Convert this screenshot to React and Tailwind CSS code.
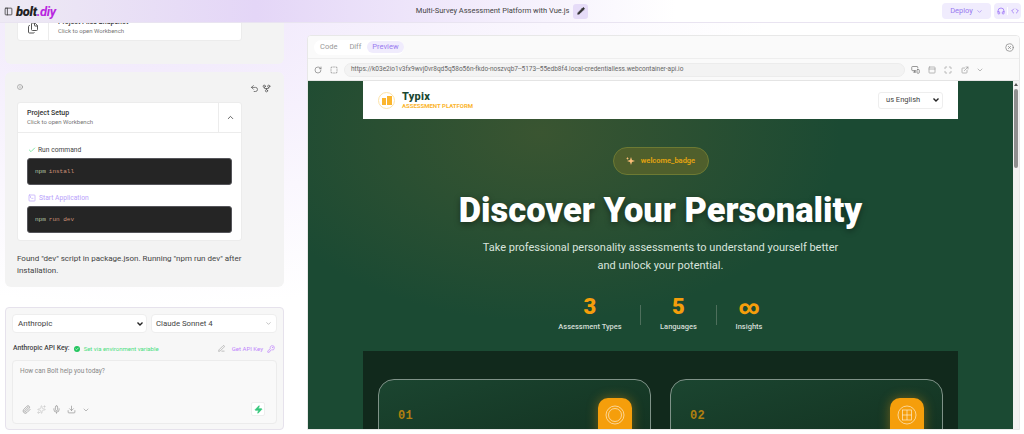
import React from "react";
import {
  PanelLeft, Info, Undo2, GitFork, ChevronUp, ChevronDown, Check, SquareTerminal, Files, Pencil, KeyRound,
  Paperclip, Sparkles, Mic, Download, Zap, RotateCw, SquareDashed, MonitorSmartphone, PanelTop, Maximize,
  ExternalLink, CircleX, Headphones, Code, PenLine,
} from "lucide-react";

const font = { fontFamily: 'Roboto, "Noto Sans", sans-serif' };

const CommandBlock = ({ cmd }) => (
  <div className="mx-[9px] h-[27px] flex items-center pl-[7px] rounded-[3px] bg-[#252525] border border-[#55555a] font-['Liberation_Mono',monospace] text-[6px]">
    <span className="text-[#b5cea8]">npm</span>
    <span className="ml-[3px] text-[#ce9178]">{cmd}</span>
  </div>
);

const Stat = ({ value, label, w, big }) => (
  <div className={`${w} flex flex-col items-center`}>
    <div className={`h-[24px] flex items-center font-black text-[#f59e0b] leading-none ${big ? "text-[20px]" : "text-[22px]"}`}>{value}</div>
    <div className="mt-[2px] text-[7.5px] font-medium text-[#d3ddd6]">{label}</div>
  </div>
);

const SurveyCard = ({ num, children }) => (
  <div className="flex-1 h-[80px] rounded-t-[16px] border border-[#7f9288] bg-gradient-to-br from-[#1b4530] to-[#12301f] flex justify-between pl-[19px] pr-[18px] pt-[18px]">
    <span className="mt-[12px] text-[12px] font-['Liberation_Mono',monospace] font-bold text-[#b07f10] tracking-wide leading-none">{num}</span>
    <div className="w-[34px] h-[44px] rounded-[10px] bg-[#f59e0b] shadow-[0_0_12px_rgba(245,158,11,0.4)] flex justify-center pt-[7px]">{children}</div>
  </div>
);

const Arrow = () => (
  <svg width="6" height="4" viewBox="0 0 6 4" fill="none" stroke="#222" strokeWidth="1.4"><path d="M.5.5 3 3 5.5.5" /></svg>
);

export default function App() {
  return (
    <div style={font} className="w-[1024px] h-[434px] overflow-hidden flex flex-col bg-[radial-gradient(ellipse_at_15%_0%,#efe6fb_0%,#faf7fe_32%,#ffffff_50%)] text-[#333]">
      {/* top bar */}
      <header className="h-[23px] shrink-0 flex items-center border-b border-[#e9e4f1] bg-gradient-to-r from-[#eeeaf4] via-[#e4d6f7] via-25% to-white to-[66%] relative">
        <PanelLeft className="ml-[4px] w-[9px] h-[9px] text-[#333]" />
        <div className="ml-[3px] text-[13px] font-black italic leading-none tracking-tight text-[#222]">
          bolt<span className="text-[#b826e0] font-bold">.diy</span>
        </div>
        <div className="ml-[360px] flex items-center text-[7.5px] text-[#444]">
          Multi-Survey Assessment Platform with Vue.js
          <span className="ml-[4px] w-[15px] h-[15px] rounded-[3px] bg-[#e6dcf8] flex items-center justify-center">
            <Pencil className="w-[8px] h-[8px] text-[#333]" fill="#333" />
          </span>
        </div>
        <div className="ml-auto flex items-center mr-[3px]">
          <div className="w-[49px] h-[16px] rounded-[4px] bg-[#f0ecfd] flex items-center justify-center gap-[3px] text-[7.5px] text-[#9a7bf0]">
            Deploy <ChevronDown className="w-[7px] h-[7px]" />
          </div>
          <div className="ml-[3px] w-[27px] h-[16px] rounded-[4px] bg-[#f0ecfd] flex items-center text-[#8b5cf6]">
            <span className="w-[14px] flex justify-center border-r border-white"><Headphones className="w-[8px] h-[8px]" /></span>
            <span className="w-[13px] flex justify-center"><Code className="w-[8px] h-[8px]" /></span>
          </div>
        </div>
      </header>

      <div className="flex flex-1 min-h-0">
        {/* chat column */}
        <div className="w-[307px] shrink-0 overflow-hidden pl-[5px] flex flex-col">
          <div className="w-[279px] h-[65px] -mt-[24px] shrink-0 rounded-[6px] bg-[#f3f3f3] pl-[12px] pt-[10px]">
            <div className="w-[225px] h-[32px] rounded-[3px] bg-white border border-[#ececec] flex">
              <div className="w-[31px] border-r border-[#ececec] flex items-center justify-center pt-[6px]">
                <Files className="w-[12px] h-[12px] text-[#555]" />
              </div>
              <div className="pl-[9px] pt-[9px] leading-none">
                <div className="text-[7px] font-medium text-[#333]">Project Files Snapshot</div>
                <div className="mt-[2px] text-[6px] text-[#777]">Click to open Workbench</div>
              </div>
            </div>
          </div>

          <div className="w-[279px] h-[215px] mt-[8px] shrink-0 rounded-[6px] bg-[#f3f3f3] pl-[12px]">
            <div className="h-[30px] flex items-center justify-between pr-[13px] text-[#777]">
              <Info className="w-[6px] h-[6px]" />
              <div className="flex items-center gap-[3px] mt-[2px] text-[#555]">
                <Undo2 className="w-[9px] h-[9px]" />
                <GitFork className="w-[9px] h-[9px]" />
              </div>
            </div>
            <div className="w-[225px] h-[139px] rounded-[3px] bg-white border border-[#ececec]">
              <div className="h-[30px] flex border-b border-[#ececec]">
                <div className="flex-1 pl-[9px] pt-[7px] leading-none">
                  <div className="text-[7px] font-medium text-[#333]">Project Setup</div>
                  <div className="mt-[2px] text-[6px] text-[#777]">Click to open Workbench</div>
                </div>
                <div className="w-[23px] border-l border-[#ececec] flex items-center justify-center">
                  <ChevronUp className="w-[9px] h-[9px] text-[#333]" />
                </div>
              </div>
              <div className="mt-[12px] ml-[10px] h-[10px] flex items-center text-[6.7px] text-[#444]">
                <Check className="w-[8px] h-[8px] text-[#4ade80]" />
                <span className="ml-[2px]">Run command</span>
              </div>
              <div className="mt-[3px]"><CommandBlock cmd="install" /></div>
              <div className="mt-[8px] ml-[10px] h-[10px] flex items-center text-[6.7px] text-[#b9a2fb]">
                <SquareTerminal className="w-[8px] h-[8px]" />
                <span className="ml-[3px]">Start Application</span>
              </div>
              <div className="mt-[3px]"><CommandBlock cmd="run dev" /></div>
            </div>
            <p className="mt-[12px] w-[225px] text-[8px] leading-[12px] text-[#444]">
              Found "dev" script in package.json. Running "npm run dev" after installation.
            </p>
          </div>

          {/* prompt box */}
          <div className="w-[279px] h-[123px] mt-[20px] shrink-0 rounded-[4px] border border-[#e6e2ec] bg-[#f7f7f7] px-[6px] pt-[6px]">
            <div className="flex gap-[4px]">
              <div className="w-[135px] h-[19px] rounded-[4px] border border-[#eee] bg-white flex items-center justify-between pl-[5px] pr-[3px] text-[8px] text-[#444]">
                Anthropic
                <Arrow />
              </div>
              <div className="flex-1 h-[19px] rounded-[4px] border border-[#eee] bg-white flex items-center justify-between pl-[4px] pr-[4px] text-[7.8px] text-[#444]">
                Claude Sonnet 4
                <ChevronDown className="w-[7px] h-[7px] text-[#999]" />
              </div>
            </div>
            <div className="h-[9px] mt-[11px] px-[1px] flex items-center text-[6px]">
              <span className="font-medium text-[6.8px] text-[#444]">Anthropic API Key:</span>
              <span className="ml-[4px] w-[6px] h-[6px] rounded-full bg-[#22c55e] flex items-center justify-center">
                <Check className="w-[4px] h-[4px] text-white" strokeWidth={4} />
              </span>
              <span className="ml-[4px] text-[#4ade80]">Set via environment variable</span>
              <PenLine className="ml-auto w-[7px] h-[7px] text-[#999]" />
              <span className="ml-[7px] text-[#c084fc]">Get API Key</span>
              <KeyRound className="ml-[4px] mr-[1px] w-[8px] h-[8px] text-[#c084fc]" />
            </div>
            <div className="mt-[7px] h-[64px] rounded-[4px] border border-[#ececec] bg-[#f9f9f9] relative pl-[7px] pt-[6px] text-[6.5px] text-[#888]">
              How can Bolt help you today?
              <div className="absolute left-[9px] bottom-[9px] flex items-center gap-[6px] text-[#999]">
                <Paperclip className="w-[9px] h-[9px]" />
                <Sparkles className="w-[9px] h-[9px] text-[#ccc]" />
                <Mic className="w-[9px] h-[9px]" />
                <Download className="w-[9px] h-[9px]" />
                <ChevronDown className="w-[8px] h-[8px]" />
              </div>
              <div className="absolute right-[11px] bottom-[7px] w-[14px] h-[14px] rounded-[2px] bg-white border border-[#eee] flex items-center justify-center">
                <Zap className="w-[9px] h-[9px] text-[#34c77b]" fill="#34c77b" />
              </div>
            </div>
          </div>
        </div>

        {/* workbench */}
        <div className="w-[713px] h-[395px] mt-[12px] shrink-0 rounded-t-[4px] border border-[#e8e8e8] bg-white overflow-hidden flex flex-col">
          <div className="h-[23px] shrink-0 bg-[#fafafa] border-b border-[#eee] flex items-center pl-[6px] pr-[5px]">
            <div className="flex items-center h-[15px] rounded-full bg-white text-[7.5px] text-[#999]">
              <span className="px-[6px]">Code</span>
              <span className="px-[6px]">Diff</span>
              <span className="px-[5px] h-[12px] flex items-center rounded-full bg-[#f0ecfd] text-[#9a7bf0]">Preview</span>
            </div>
            <CircleX className="ml-auto w-[9px] h-[9px] text-[#888]" />
          </div>
          <div className="h-[22px] shrink-0 bg-[#fafafa] border-b border-[#e4e4e4] flex items-center pl-[6px] pr-[4px] text-[#777]">
            <RotateCw className="w-[8px] h-[8px]" />
            <SquareDashed className="ml-[8px] w-[8px] h-[8px]" />
            <div className="ml-[6px] w-[561px] h-[14px] rounded-full bg-[#f3f3f3] border border-[#ececec] flex items-center pl-[6px] text-[6.5px] text-[#666] whitespace-nowrap overflow-hidden">
              https://k03e2io1v3fx9wvj0vr8qd5q58o56n-fkdo-noszvqb7--5173--55edb8f4.local-credentialless.webcontainer-api.io
            </div>
            <MonitorSmartphone className="ml-[6px] w-[9px] h-[9px]" />
            <PanelTop className="ml-[8px] w-[8px] h-[8px] text-[#999]" />
            <Maximize className="ml-[8px] w-[8px] h-[8px] text-[#999]" />
            <ExternalLink className="ml-[9px] w-[8px] h-[8px] text-[#999]" />
            <ChevronDown className="ml-[7px] w-[8px] h-[8px] text-[#999]" />
          </div>

          {/* preview */}
          <div className="flex-1 min-h-0 flex">
            <div className="flex-1 min-w-0 overflow-hidden bg-[#1b4a33] bg-[radial-gradient(ellipse_at_33%_15%,#3a5531_0%,rgba(63,90,50,0)_45%)] px-[55px]">
              <div className="h-[38px] bg-white flex items-center pl-[15px] pr-[15px]">
                <div className="w-[17px] h-[17px] rounded-full border border-[#fde3a7] flex items-end justify-center pb-[3px] gap-px">
                  <div className="w-[4px] h-[7px] bg-[#fbb52d]" />
                  <div className="w-[5px] h-[9px] bg-[#fbb52d]" />
                </div>
                <div className="ml-[7px] leading-none">
                  <div className="text-[11px] font-extrabold tracking-wide text-[#1a4731]">Typix</div>
                  <div className="mt-[1px] text-[6px] font-bold text-[#fbb52d]">ASSESSMENT PLATFORM</div>
                </div>
                <div className="ml-auto w-[65px] h-[17px] rounded-[3px] border border-[#eee] bg-white flex items-center justify-between pl-[7px] pr-[3px] text-[7.5px] text-[#444]">
                  us English
                  <Arrow />
                </div>
              </div>
              <div className="flex flex-col items-center text-center">
                <div className="mt-[28px] w-[96px] h-[28px] rounded-full border border-[#6d7a33] bg-[#4f5f2c] flex items-center justify-center gap-[5px] text-[7.5px] font-semibold text-[#e5a50f]">
                  <svg width="10" height="10" viewBox="0 0 10 10" fill="#fbbf77"><path d="M5 1 6 4 9 5 6 6 5 9 4 6 1 5 4 4Z" /><path d="M1.5 1 2 2 3 2.4 2 2.8 1.5 4 1 2.8 0 2.4 1 2Z" /></svg>
                  welcome_badge
                </div>
                <h1 className="mt-[12px] h-[46px] text-[34.5px] leading-[46px] font-black text-white whitespace-nowrap [text-shadow:0_2px_6px_rgba(0,0,0,0.4)]">
                  Discover Your Personality
                </h1>
                <p className="mt-[6px] w-[365px] text-[11px] leading-[18px] text-[#d9e4dd]">
                  Take professional personality assessments to understand yourself better and unlock your potential.
                </p>
                <div className="mt-[20px] h-[44px] flex items-start">
                  <Stat value="3" label="Assessment Types" w="w-[100px]" />
                  <div className="w-px h-[20px] mt-[10px] bg-[#4e6f5c]" />
                  <Stat value="5" label="Languages" w="w-[75px]" />
                  <div className="w-px h-[20px] mt-[10px] bg-[#4e6f5c]" />
                  <Stat value="∞" label="Insights" w="w-[64px]" big />
                </div>
              </div>
              <div className="mt-[12px] h-[90px] bg-[#11291c] flex gap-[19px] pl-[15px] pr-[15px] pt-[28px]">
                <SurveyCard num="01">
                  <svg width="20" height="20" viewBox="0 0 20 20" fill="none" stroke="#fff" strokeOpacity=".8" strokeWidth=".7">
                    <circle cx="10" cy="10" r="9" /><circle cx="10" cy="10" r="6.5" />
                  </svg>
                </SurveyCard>
                <SurveyCard num="02">
                  <svg width="20" height="20" viewBox="0 0 20 20" fill="none" stroke="#fff" strokeOpacity=".8" strokeWidth=".7">
                    <circle cx="10" cy="10" r="9" /><rect x="5.5" y="5" width="9" height="10" /><path d="M10 5v10M5.5 10h9" />
                  </svg>
                </SurveyCard>
              </div>
            </div>
            {/* scrollbar */}
            <div className="w-[6px] shrink-0 bg-[#f1f1f1] flex flex-col items-center pt-[2px]">
              <div className="w-0 h-0 border-x-[2px] border-x-transparent border-b-[3px] border-b-[#555]" />
              <div className="mt-[3px] w-[4px] h-[79px] rounded-full bg-[#8f8f8f]" />
            </div>
          </div>
        </div>
      </div>
    </div>
  );
}
